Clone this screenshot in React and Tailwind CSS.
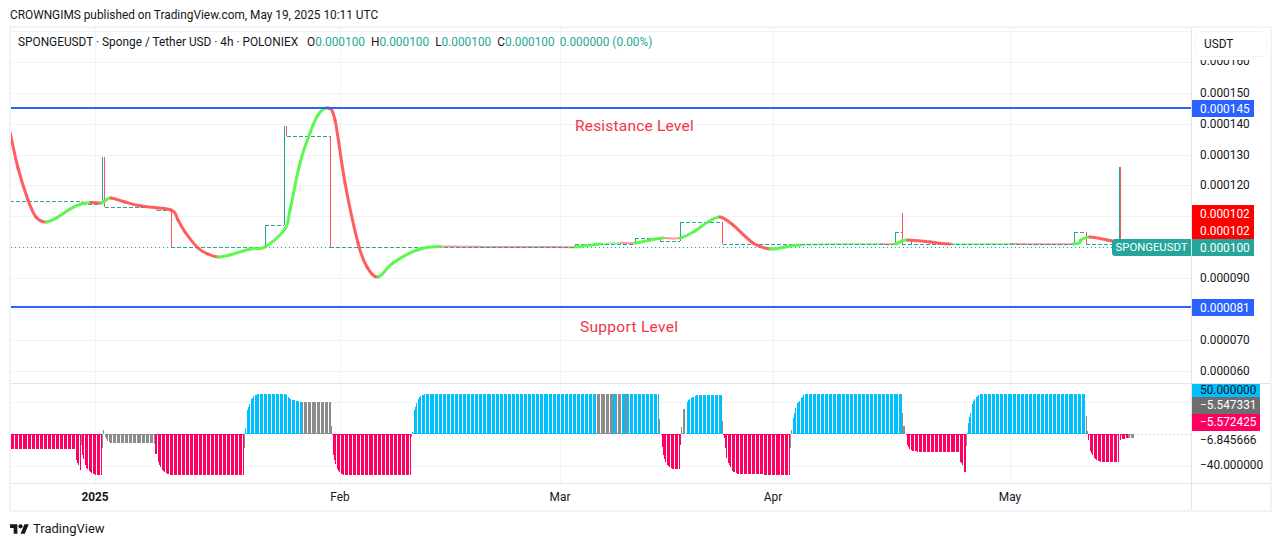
const hLines = [31, 62, 93, 124, 155, 185, 216, 247, 278, 309, 340, 371];
const vLines = [95, 340, 560, 773, 1010];

const prices = [
  ["0.000160", 61],
  ["0.000150", 93],
  ["0.000140", 124],
  ["0.000130", 155],
  ["0.000120", 185],
  ["0.000090", 278],
  ["0.000070", 340],
  ["0.000060", 371],
];

const priceTags = [
  ["0.000145", 100, 17, "bg-[#2962ff]"],
  ["0.000102", 205, 17, "bg-[#ff0000]"],
  ["0.000102", 222, 17, "bg-[#ff0000]"],
  ["0.000100", 239, 17, "bg-[#26a69a]"],
  ["0.000081", 299, 17, "bg-[#2962ff]"],
];

const dates = [
  ["2025", 95, true],
  ["Feb", 340, false],
  ["Mar", 560, false],
  ["Apr", 773, false],
  ["May", 1010, false],
];

// x, y, colour of the piece that starts here
const curve = [
  [10, 132, "r"], [18, 168, "r"], [28, 200, "r"], [36, 217, "r"], [46, 222, "g"], [58, 217, "g"], [70, 209, "g"], [81, 204, "g"],
  [91, 202.5, "r"], [101, 203, "g"], [106, 200, "g"], [111, 198, "r"], [125, 202, "r"], [141, 206, "r"], [171, 210, "r"], [178, 220, "r"],
  [185, 232, "r"], [198, 248, "r"], [208, 254, "r"], [218, 257, "g"], [230, 255, "g"], [250, 249, "g"], [265, 247, "g"], [285, 229, "g"],
  [290, 210, "g"], [300, 163, "g"], [310, 133, "g"], [318, 115, "g"], [328, 108, "r"], [335, 120, "r"], [345, 183, "r"], [358, 243, "r"],
  [367, 267, "r"], [378, 277, "g"], [393, 263, "g"], [417, 250, "g"], [440, 246.5, "r"], [500, 247, "r"], [560, 247, "r"], [575, 247, "g"],
  [600, 244, "g"], [620, 243, "r"], [635, 243, "g"], [650, 240, "g"], [663, 238, "r"], [680, 238, "g"], [695, 231, "g"], [708, 222, "g"],
  [720, 217, "r"], [733, 225, "r"], [753, 243, "r"], [770, 249, "g"], [785, 247, "g"], [800, 245, "g"], [840, 244, "g"], [880, 244, "r"],
  [895, 244, "g"], [902, 241, "g"], [908, 240, "r"], [930, 242, "r"], [950, 244, "g"], [1010, 244, "r"], [1073, 244, "g"], [1081, 240, "g"],
  [1090, 237, "r"], [1112, 241, "r"],
];

// catmull-rom pieces so the colour changes stay on one smooth line
function curvePieces() {
  const out = [];
  for (let i = 0; i < curve.length - 1; i++) {
    const p0 = curve[Math.max(i - 1, 0)];
    const p1 = curve[i];
    const p2 = curve[i + 1];
    const p3 = curve[Math.min(i + 2, curve.length - 1)];
    const c1x = p1[0] + (p2[0] - p0[0]) / 6;
    const c1y = p1[1] + (p2[1] - p0[1]) / 6;
    const c2x = p2[0] - (p3[0] - p1[0]) / 6;
    const c2y = p2[1] - (p3[1] - p1[1]) / 6;
    const flat = Math.abs(p2[1] - p1[1]) / (p2[0] - p1[0]) < 0.08 && p1[0] > 420;
    out.push({ d: `M${p1[0]} ${p1[1]}C${c1x} ${c1y} ${c2x} ${c2y} ${p2[0]} ${p2[1]}`, color: p1[2], flat });
  }
  return out;
}

const dotted = [
  [11, 171], [265, 330], [575, 1112],
];

const dashed = [
  [10, 82, 201], [82, 101, 204], [105, 156, 207], [157, 171, 210], [171, 265, 247], [265, 284, 225], [287, 330, 136],
  [330, 575, 247], [575, 635, 244], [635, 660, 238], [660, 680, 241], [680, 722, 222], [723, 895, 244], [895, 902, 232],
  [902, 1074, 244], [1074, 1086, 232], [1086, 1112, 244],
];

const upWicks = [
  [102, 157, 204], [265, 225, 247], [284, 126, 225], [575, 244, 247], [635, 238, 244], [680, 222, 241], [895, 232, 244],
  [911, 240, 244], [1074, 232, 244], [1119, 167, 240],
];

const downWicks = [
  [82, 201, 204], [104, 157, 207], [156, 207, 210], [171, 210, 247], [286, 126, 136], [330, 136, 247], [660, 238, 241],
  [722, 222, 244], [902, 213, 244], [1086, 232, 244], [1120, 167, 240],
];

// histogram envelope: colour + outer edge of the column per x range
const PINK = "#ff0062";
const BLUE = "#00bfff";
const GRAY = "#8c8c8c";
const histo = [
  [PINK, [[11, 449], [74, 449], [75, 458], [80, 470]]],
  [GRAY, [[81, 445], [81, 445]]],
  [PINK, [[82, 455], [84, 462], [86, 468], [90, 472], [95, 475], [101, 475]]],
  [GRAY, [[102, 448], [102, 448]]],
  [BLUE, [[103, 430], [103, 430]]],
  [GRAY, [[105, 437], [107, 441], [110, 443], [154, 443.5]]],
  [PINK, [[155, 454], [156, 454], [157, 460], [160, 467], [163, 471], [167, 474], [173, 475], [243, 475]]],
  [GRAY, [[244, 448], [244, 448]]],
  [BLUE, [[245, 428], [246, 420], [247, 410], [250, 401], [253, 396], [258, 394], [285, 394], [290, 399], [300, 402], [301, 402]]],
  [GRAY, [[302, 402], [330, 402]]],
  [GRAY, [[331, 426], [331, 426]]],
  [PINK, [[332, 450], [334, 460], [336, 468], [339, 472], [343, 475], [410, 475]]],
  [GRAY, [[411, 437], [411, 437]]],
  [BLUE, [[412, 432], [414, 410], [417, 400], [420, 396], [425, 394], [596, 394]]],
  [GRAY, [[597, 394], [612, 394]]],
  [BLUE, [[613, 394], [615, 394]]],
  [GRAY, [[616, 394], [620, 394]]],
  [BLUE, [[621, 394], [624, 394]]],
  [GRAY, [[625, 394], [626, 394]]],
  [BLUE, [[627, 394], [658, 394]]],
  [GRAY, [[659, 419], [659, 419]]],
  [PINK, [[661, 447], [662, 447], [663, 455], [665, 462], [668, 466], [672, 468.5], [679, 468.7]]],
  [PINK, [[680, 445], [680, 445]]],
  [GRAY, [[681, 427], [682, 427], [683, 409], [684, 409]]],
  [BLUE, [[686, 404], [688, 400], [692, 397], [696, 395], [721, 394.5]]],
  [GRAY, [[722, 421], [722, 421]]],
  [PINK, [[723, 438], [724, 438], [726, 458], [729, 465], [732, 471], [735, 473], [739, 474], [789, 475]]],
  [GRAY, [[790, 448], [790, 448]]],
  [GRAY, [[791, 430], [791, 430]]],
  [BLUE, [[793, 418], [795, 408], [797, 403], [800, 400], [803, 395], [805, 394], [901, 394]]],
  [GRAY, [[902, 413], [902, 413]]],
  [GRAY, [[903, 426], [904, 426]]],
  [PINK, [[906, 441], [907, 445], [909, 449], [912, 451], [918, 451.7], [958, 451.7], [959, 460], [962, 465], [963, 471], [965, 472]]],
  [GRAY, [[966, 446], [966, 446]]],
  [BLUE, [[967, 428], [969, 417], [971, 408], [972, 404], [973, 401], [975, 397], [977, 396], [980, 394], [1085, 394]]],
  [GRAY, [[1086, 416], [1086, 416]]],
  [GRAY, [[1087, 431], [1087, 431]]],
  [PINK, [[1088, 440], [1089, 448], [1091, 453], [1095, 459], [1100, 462], [1118, 462]]],
  [PINK, [[1120, 440], [1127, 438]]],
  [GRAY, [[1128, 438], [1133, 438]]],
];

function edgeAt(pts, x) {
  for (let i = 0; i < pts.length - 1; i++) {
    if (x >= pts[i][0] && x <= pts[i + 1][0]) {
      const span = pts[i + 1][0] - pts[i][0] || 1;
      return pts[i][1] + ((pts[i + 1][1] - pts[i][1]) * (x - pts[i][0])) / span;
    }
  }
  return pts[pts.length - 1][1];
}

function histoBars() {
  const base = 434;
  const bars = [];
  histo.forEach(([color, pts]) => {
    const wide = pts[pts.length - 1][0] - pts[0][0] > 2;
    for (let x = Math.ceil(pts[0][0]); x <= pts[pts.length - 1][0]; x++) {
      const edge = edgeAt(pts, x);
      const up = edge < base;
      // the bars fall between pixels every 4th column or so, leaving a stub at the base
      if (wide && Math.floor(x * 0.2457 + 0.35) !== Math.floor((x + 1) * 0.2457 + 0.35)) {
        bars.push(<rect key={x} x={x} y={up ? base - 1 : base} width="1" height="1" fill={color} />);
        continue;
      }
      bars.push(<rect key={x} x={x} y={up ? edge : base} width="1" height={Math.abs(edge - base)} fill={color} />);
    }
  });
  return bars;
}

function MainChart() {
  const pieces = curvePieces();
  const stroke = (p) => (p.color === "r" ? "#ff5555" : "#55f74a");
  return (
    <svg className="absolute inset-0" width="1180" height="355" viewBox="11 28 1180 355">
      {hLines.map((y) => (
        <line key={y} x1="11" x2="1191" y1={y + 0.5} y2={y + 0.5} stroke="#f2f3f6" />
      ))}
      {vLines.map((x) => (
        <line key={x} x1={x + 0.5} x2={x + 0.5} y1="28" y2="383" stroke="#f2f3f6" />
      ))}
      {pieces.filter((p) => p.flat).map((p, i) => (
        <path key={i} d={p.d} fill="none" strokeWidth="2" strokeOpacity="0.6" stroke={stroke(p)} />
      ))}
      {dotted.map(([a, b]) => (
        <line key={a} x1={a} x2={b} y1="247.5" y2="247.5" stroke="#26a69a" strokeDasharray="1 3" />
      ))}
      {dashed.map(([a, b, y]) => (
        <line key={a} x1={a} x2={b} y1={y + 0.5} y2={y + 0.5} stroke="#26a69a" strokeDasharray="4 2" />
      ))}
      {upWicks.map(([x, a, b]) => (
        <line key={x} x1={x + 0.5} x2={x + 0.5} y1={a} y2={b} stroke="#26a69a" />
      ))}
      {downWicks.map(([x, a, b]) => (
        <line key={x} x1={x + 0.5} x2={x + 0.5} y1={a} y2={b} stroke="#ff5252" />
      ))}
      {pieces.filter((p) => !p.flat).map((p, i) => (
        <path key={i} d={p.d} fill="none" strokeWidth="3" strokeOpacity="0.95" strokeLinecap="round" stroke={stroke(p)} />
      ))}
      <rect x="11" y="107" width="1180" height="2" fill="#2962ff" />
      <rect x="11" y="306" width="1180" height="2" fill="#2962ff" />
    </svg>
  );
}

function IndicatorChart() {
  return (
    <svg className="absolute inset-0" width="1180" height="99" viewBox="11 384 1180 99" shapeRendering="crispEdges">
      {[402, 466].map((y) => (
        <line key={y} x1="11" x2="1191" y1={y + 0.5} y2={y + 0.5} stroke="#f2f3f6" />
      ))}
      {vLines.map((x) => (
        <line key={x} x1={x + 0.5} x2={x + 0.5} y1="384" y2="483" stroke="#f2f3f6" />
      ))}
      <line x1="1133" x2="1191" y1="434.5" y2="434.5" stroke="#d9dce3" strokeDasharray="2 2" />
      {histoBars()}
    </svg>
  );
}

function Legend() {
  const Val = ({ k, v, gap }) => (
    <span className={gap}>
      {k}
      <span className="text-[#26a69a]">{v}</span>
    </span>
  );
  return (
    <div className="absolute left-[7px] top-[6px] flex h-[17px] items-center whitespace-nowrap text-[#131722]">
      <span className="mr-[9px]">SPONGEUSDT · Sponge / Tether USD · 4h · POLONIEX</span>
      <Val k="O" v="0.000100" gap="mr-[6px]" />
      <Val k="H" v="0.000100" gap="mr-[6px]" />
      <Val k="L" v="0.000100" gap="mr-[6px]" />
      <Val k="C" v="0.000100" gap="mr-[5px]" />
      <span className="text-[#26a69a]">0.000000 (0.00%)</span>
    </div>
  );
}

function LogoMark() {
  return (
    <svg width="19" height="10" viewBox="0 4 36 18" fill="#131722">
      <path d="M14 22H7V11H0V4h14v18zM28 22h-8l7.5-18h8L28 22z" />
      <circle cx="20" cy="8" r="4" />
    </svg>
  );
}

export default function App() {
  return (
    <div className="flex h-[546px] w-[1281px] flex-col overflow-hidden bg-white font-['Roboto',sans-serif] text-[11.85px] text-[#131722]">
      <div className="flex h-[26px] items-center pl-[10px] pt-[6px]">
        CROWNGIMS published on TradingView.com, May 19, 2025 10:11 UTC
      </div>

      <div className="ml-[9px] flex h-[486px] w-[1263px] flex-col border-2 border-[#f2f3f6]">
        <div className="flex h-[355px]">
          <div className="relative w-[1180px] overflow-hidden">
            <MainChart />
            <Legend />
            <div className="absolute left-[564px] top-[87px] text-[15.5px] tracking-[0.2px] text-[#f23645]">Resistance Level</div>
            <div className="absolute left-[569px] top-[288px] text-[15.5px] tracking-[0.3px] text-[#f23645]">Support Level</div>
            <div className="absolute left-[1101px] top-[211px] flex h-[17px] w-[79px] items-center justify-center rounded-l-[3px] bg-[#26a69a] pt-[2px] text-[11.3px] text-white">
              SPONGEUSDT
            </div>
          </div>
          <div className="relative w-[79px] border-l border-[#e0e3eb]">
            {prices.map(([t, y]) => (
              <div key={t} className="absolute left-[8px] leading-[14px]" style={{ top: y - 35 }}>
                {t}
              </div>
            ))}
            {priceTags.map(([t, y, h, bg]) => (
              <div key={y} className={`absolute left-0 flex w-[62px] items-center pl-[8px] pt-[2px] text-white ${bg}`} style={{ top: y - 28, height: h }}>
                {t}
              </div>
            ))}
            <div className="absolute left-0 right-0 top-0 h-[32px] bg-white pl-[3px] pt-[3px]">
              <div className="flex h-[26px] w-[72px] items-center rounded-[5px] border border-[#f0f3fa] bg-white pl-[8px] pt-[1px]">
                USDT
              </div>
            </div>
          </div>
        </div>

        <div className="flex h-[100px] border-t border-[#e0e3eb]">
          <div className="relative w-[1180px] overflow-hidden">
            <IndicatorChart />
          </div>
          <div className="relative w-[79px] border-l border-[#e0e3eb]">
            <div className="absolute left-0 top-0 flex h-[13px] w-[68px] items-center bg-[#00bfff] pl-[8px]">50.000000</div>
            <div className="absolute left-0 top-[13px] flex h-[17px] w-[68px] items-center bg-[#6e6e6e] pl-[8px] pt-[1px] text-white">−5.547331</div>
            <div className="absolute left-0 top-[30px] flex h-[17px] w-[68px] items-center bg-[#ff0062] pl-[8px] text-white">−5.572425</div>
            <div className="absolute left-[8px] top-[48px]">−6.845666</div>
            <div className="absolute left-[8px] top-[73px]">−40.000000</div>
          </div>
        </div>

        <div className="flex flex-1 border-t border-[#e0e3eb]">
          <div className="relative w-[1180px]">
            {dates.map(([t, x, bold]) => (
              <div
                key={t}
                className={`absolute top-[5px] w-[40px] text-center ${bold ? "font-bold" : ""}`}
                style={{ left: x - 11 - 20 }}
              >
                {t}
              </div>
            ))}
          </div>
          <div className="w-[79px] border-l border-[#e0e3eb]" />
        </div>
      </div>

      <div className="flex flex-1 items-center gap-[4px] pl-[10px]">
        <LogoMark />
        <span className="text-[13px]">TradingView</span>
      </div>
    </div>
  );
}
